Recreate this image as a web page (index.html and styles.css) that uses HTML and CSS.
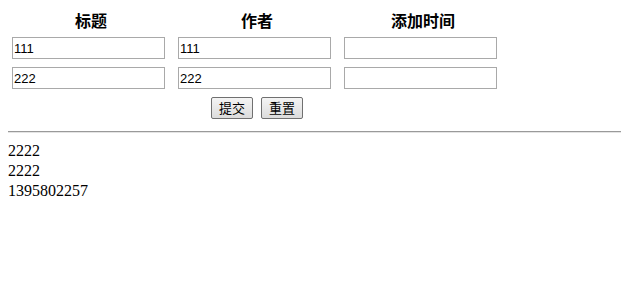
FILE: index.html
```html
<!DOCTYPE html>
<html lang="zh">
  <head>
    <meta charset="UTF-8" />
    <title>留言</title>
    <link rel="stylesheet" href="styles.css">
  </head>
  <body>
    <form class="post-form">
      <table class="post-table">
        <tr>
          <th>标题</th>
          <th>作者</th>
          <th>添加时间</th>
        </tr>
        <tr>
          <td><input type="text" name="title[]" value="111" /></td>
          <td><input type="text" name="author[]" value="111" /></td>
          <td><input type="text" name="time[]" value="" /></td>
        </tr>
        <tr>
          <td><input type="text" name="title[]" value="222" /></td>
          <td><input type="text" name="author[]" value="222" /></td>
          <td><input type="text" name="time[]" value="" /></td>
        </tr>
        <tr>
          <td colspan="3">
            <div class="actions">
              <button type="submit">提交</button>
              <button type="reset">重置</button>
            </div>
          </td>
        </tr>
      </table>
    </form>
    <div class="divider"></div>
    <div class="output">
      <div>2222</div>
      <div>2222</div>
      <div>1395802257</div>
    </div>
  </body>
</html>
```

FILE: styles.css
```css
body {
    margin: 8px 0 8px 8px;
    background-color: #fff;
    color: #000;
    font-family: "Liberation Serif", "Noto Sans CJK SC", serif;
    font-size: 16px;
}
.post-form {
    margin: 0;
}
.post-table {
    border-collapse: collapse;
    border-spacing: 0;
}
.post-table th {
    width: 166px;
    padding: 4px 0;
    line-height: 17px;
    font-size: 16px;
    font-weight: bold;
    text-align: center;
    font-family: "Noto Sans CJK SC", sans-serif;
}
.post-table td {
    padding: 4px 9px 4px 4px;
}
input[type="text"] {
    display: block;
    box-sizing: border-box;
    width: 153px;
    height: 22px;
    margin: 0;
    padding: 0 1px;
    border: 1px solid #a9a9a9;
    font-family: "Liberation Sans", Arial, sans-serif;
    font-size: 13px;
    color: #000;
    outline: none;
}
.actions {
    display: flex;
    justify-content: center;
    gap: 8px;
    padding-left: 5px;
}
button {
    box-sizing: border-box;
    height: 22px;
    padding: 0 7px;
    margin: 0;
    border: 1px solid #707070;
    border-radius: 2px;
    background: linear-gradient(#f4f4f4, #dcdcdc);
    font-family: "Noto Sans CJK SC", sans-serif;
    font-size: 13px;
    line-height: 18px;
    color: #000;
    cursor: pointer;
}
.divider {
    height: 0;
    margin: 8px 0 8px -1px;
    border-top: 1px solid #9a9a9a;
    border-bottom: 1px solid #e4e4e4;
}
.output {
    line-height: 20px;
}
```
